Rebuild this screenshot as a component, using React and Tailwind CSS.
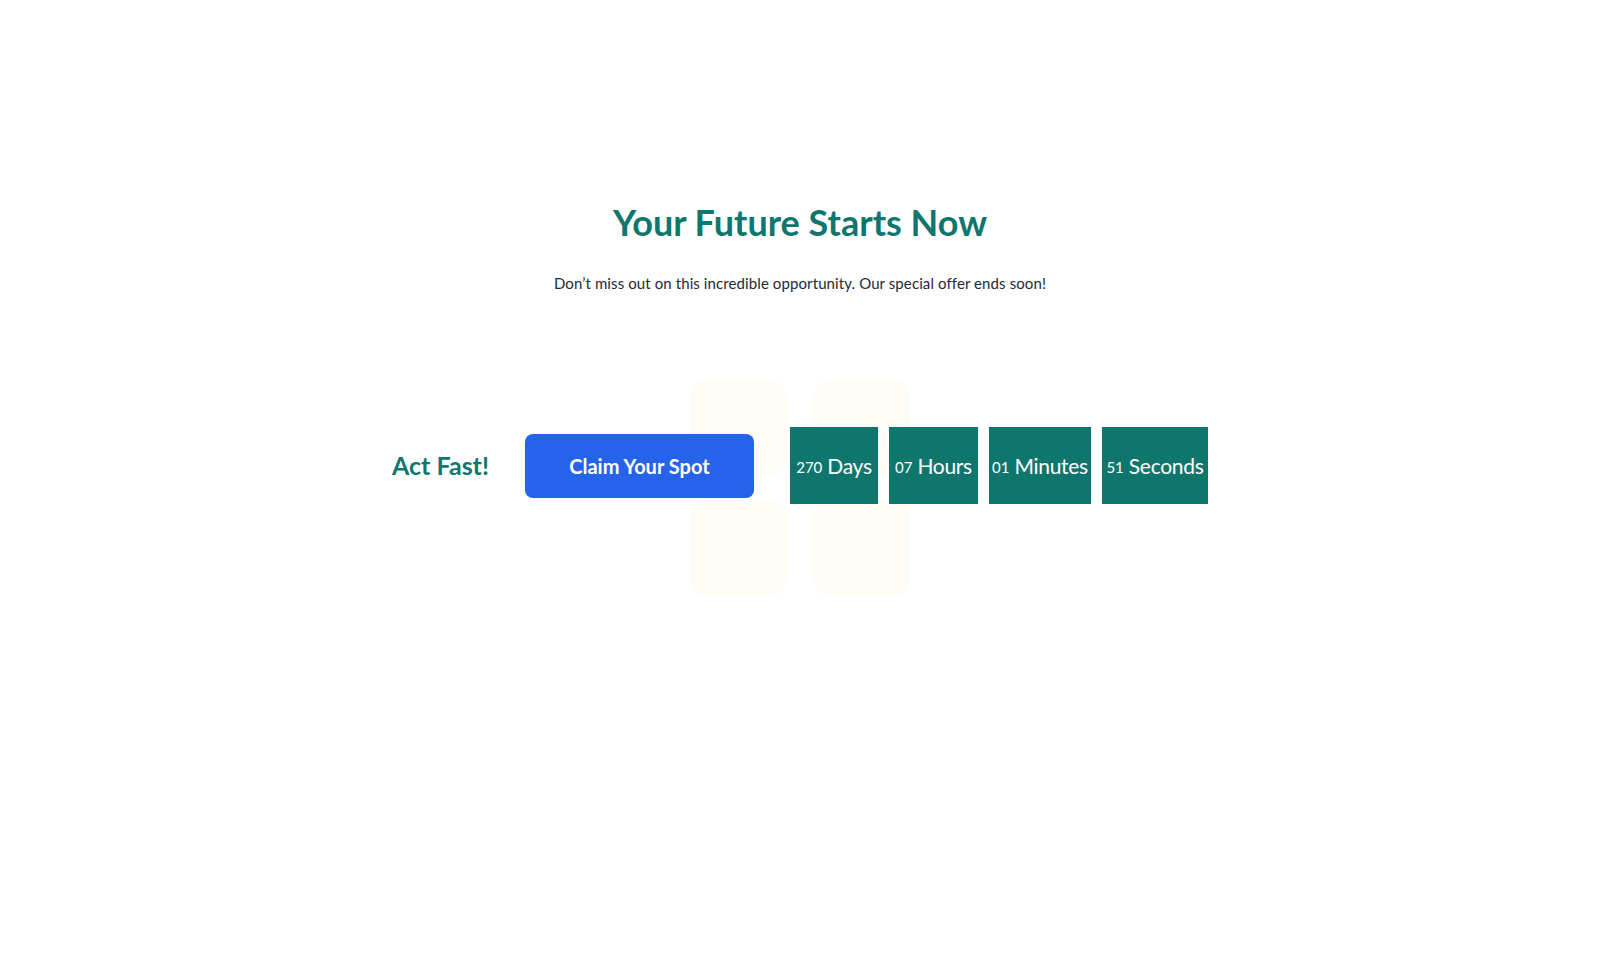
import React from "react";

const units = [
  { value: "270", label: "Days", w: "w-[88px]" },
  { value: "07", label: "Hours", w: "w-[89px]" },
  { value: "01", label: "Minutes", w: "w-[102px]" },
  { value: "51", label: "Seconds", w: "w-[106px]" },
];

const App = () => {
  return (
    <div
      className="w-full min-h-[978px] bg-white"
      style={{ fontFamily: "Lato, 'Noto Sans', sans-serif" }}
    >
      <div className="flex flex-col items-center pt-[200px]">
        <h1 className="text-[36px] leading-[44px] font-bold text-[#0f766e]">
          Your Future Starts Now
        </h1>
        <p className="mt-[27px] text-[15px] leading-[24px] text-[#1e293b] tracking-[0.1px]">
          Don’t miss out on this incredible opportunity. Our special offer ends soon!
        </p>
      </div>

      <div className="relative mt-[132px] flex justify-center items-center gap-[36px] h-[77px]">
        {/* faint decoration tiles behind the row */}
        <div className="absolute left-1/2 -translate-x-1/2 top-[-48px] grid grid-cols-2 gap-x-[25px] gap-y-[22px]">
          <div className="w-[98px] h-[98px] rounded-[20px] bg-[#fdfcf6]"></div>
          <div className="w-[98px] h-[98px] rounded-[20px] bg-[#fdfcf6]"></div>
          <div className="w-[98px] h-[98px] rounded-[20px] bg-[#fdfcf6]"></div>
          <div className="w-[98px] h-[98px] rounded-[20px] bg-[#fdfcf6]"></div>
        </div>

        <h2 className="relative text-[25px] font-bold text-[#0f766e]">Act Fast!</h2>
        <button className="relative w-[229px] h-[64px] rounded-lg bg-[#2563eb] text-white text-[20px] font-bold">
          Claim Your Spot
        </button>
        <div className="relative flex gap-[11px]">
          {units.map((u) => (
            <div
              key={u.label}
              className={`${u.w} h-[77px] bg-[#0f766e] text-white flex items-center justify-center gap-[5px]`}
            >
              <span className="text-[15px] mt-[3px]">{u.value}</span>
              <span className="text-[21px] tracking-[-0.3px]">{u.label}</span>
            </div>
          ))}
        </div>
      </div>
    </div>
  );
};

export default App;
